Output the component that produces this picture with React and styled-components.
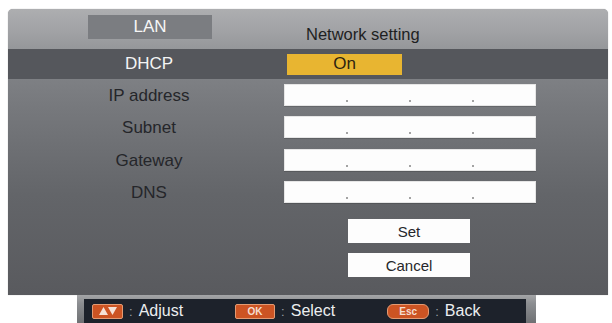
import React from "react";
import styled, { createGlobalStyle } from "styled-components";

const GlobalStyle = createGlobalStyle`
  html, body {
    margin: 0;
    padding: 0;
    background: #ffffff;
    font-family: "Liberation Sans", Arial, sans-serif;
  }
`;

const Screen = styled.div`
  width: 612px;
  height: 323px;
  padding: 9px 0 0 8px;
  box-sizing: border-box;
  overflow: hidden;
`;

const Panel = styled.div`
  width: 600px;
  height: 286px;
  border-radius: 5px 5px 0 0;
  overflow: hidden;
  display: flex;
  flex-direction: column;
  background: linear-gradient(180deg, #909296 0%, #76787c 35%, #636569 65%, #595a5e 100%);
  box-shadow: 0 0 1px rgba(0, 0, 0, 0.4);
`;

const Header = styled.div`
  height: 40px;
  flex: none;
  display: flex;
  align-items: center;
  background: linear-gradient(180deg, #adaeb0 0%, #a0a1a4 60%, #95979a 100%);
`;

const Tab = styled.div`
  width: 124px;
  height: 24px;
  margin-left: 80px;
  margin-top: -5px;
  background: #7b7d81;
  color: #f6f6f6;
  font-size: 17px;
  display: flex;
  align-items: center;
  justify-content: center;
`;

const Title = styled.div`
  margin-left: 94px;
  margin-top: 10px;
  color: #1e1f22;
  font-size: 16.5px;
`;

const Row = styled.div`
  display: grid;
  grid-template-columns: 276px 252px;
  align-items: center;
  height: ${(p) => p.h}px;
  flex: none;
  background: ${(p) => (p.active ? "#55575c" : "transparent")};
`;

const Label = styled.div`
  text-align: center;
  padding-left: 6px;
  font-size: 17px;
  color: ${(p) => (p.active ? "#f4f4f4" : "#25262a")};
  margin-top: ${(p) => (p.shift || 0)}px;
`;

const OnBox = styled.div`
  width: 115px;
  height: 21px;
  margin-left: 3px;
  background: #e8b531;
  color: #2e2410;
  font-size: 17px;
  display: flex;
  align-items: center;
  justify-content: center;
`;

const Field = styled.div`
  height: 22px;
  background: #fdfdfd;
  box-shadow: inset 0 0 0 1px #e6e6e6, 0 1px 0 rgba(0, 0, 0, 0.15);
  display: grid;
  grid-template-columns: 62px 63px 63px 64px;
`;

const Seg = styled.div`
  position: relative;
  &:not(:first-child)::before {
    content: "";
    position: absolute;
    left: 0;
    bottom: 4px;
    width: 2px;
    height: 2px;
    background: #a3a3a3;
  }
`;

const Buttons = styled.div`
  display: flex;
  flex-direction: column;
  gap: 10px;
  margin: 11px 0 0 340px;
`;

const Button = styled.div`
  width: 122px;
  height: 24px;
  background: #fdfdfd;
  color: #26272a;
  font-size: 15px;
  display: flex;
  align-items: center;
  justify-content: center;
`;

const Footer = styled.div`
  width: 459px;
  height: 28px;
  margin-left: 69px;
  box-sizing: border-box;
  padding: 4px 10px 0 7px;
  background: linear-gradient(180deg, #a4a5a7 0%, #8c8e91 30%, #6f7174 100%);
`;

const FooterInner = styled.div`
  height: 24px;
  background: #1d222b;
  display: flex;
  align-items: center;
  padding-left: 8px;
  gap: 52px;
`;

const Hint = styled.div`
  display: flex;
  align-items: center;
  color: #eceef0;
  font-size: 16px;
`;

const Key = styled.div`
  width: ${(p) => p.w}px;
  height: 15px;
  box-sizing: border-box;
  border-radius: ${(p) => p.r || 2}px;
  background: #cc5423;
  border: 1px solid #e39a72;
  color: #f5ddd0;
  font-size: 10px;
  font-weight: bold;
  display: flex;
  align-items: center;
  justify-content: center;
  margin-right: 6px;
`;

const Colon = styled.span`
  color: #9aa0a8;
  font-size: 13px;
  margin-right: 6px;
`;

const fields = ["IP address", "Subnet", "Gateway", "DNS"];

function Arrows() {
  return (
    <svg width="20" height="10" viewBox="0 0 20 10">
      <polygon points="1,9 5.5,1 10,9" fill="#f6e2d6" />
      <polygon points="10,1 19,1 14.5,9" fill="#f6e2d6" />
    </svg>
  );
}

export default function App() {
  return (
    <>
      <GlobalStyle />
      <Screen>
        <Panel>
          <Header>
            <Tab>LAN</Tab>
            <Title>Network setting</Title>
          </Header>
          <Row h={30} active>
            <Label active>DHCP</Label>
            <OnBox>On</OnBox>
          </Row>
          {fields.map((f, i) => (
            <Row key={f} h={32} style={{ marginTop: i === 2 ? 1 : 0 }}>
              <Label shift={2}>{f}</Label>
              <Field>
                <Seg />
                <Seg />
                <Seg />
                <Seg />
              </Field>
            </Row>
          ))}
          <Buttons>
            <Button>Set</Button>
            <Button>Cancel</Button>
          </Buttons>
        </Panel>
        <Footer>
          <FooterInner>
            <Hint>
              <Key w={31}>
                <Arrows />
              </Key>
              <Colon>:</Colon>Adjust
            </Hint>
            <Hint>
              <Key w={40}>OK</Key>
              <Colon>:</Colon>Select
            </Hint>
            <Hint>
              <Key w={42} r={6}>
                Esc
              </Key>
              <Colon>:</Colon>Back
            </Hint>
          </FooterInner>
        </Footer>
      </Screen>
    </>
  );
}
